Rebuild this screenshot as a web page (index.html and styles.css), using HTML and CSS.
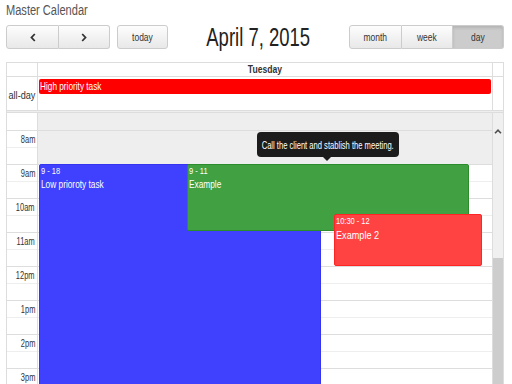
FILE: index.html
```html
<!DOCTYPE html>
<html>
<head>
    <title>Master Calendar</title>
    <link rel="stylesheet" href="styles.css">
</head>
<body>
    <h1 class="page-title"><span class="sq sq-l">Master Calendar</span></h1>

    <div class="toolbar">
        <div class="toolbar-left">
            <div class="btn-group">
                <button class="btn btn-prev">
                    <svg width="6" height="9" viewBox="0 0 6 9"><path d="M4.8 1 L1.5 4.5 L4.8 8" fill="none" stroke="#333" stroke-width="1.8"/></svg>
                </button>
                <button class="btn btn-next">
                    <svg width="6" height="9" viewBox="0 0 6 9"><path d="M1.2 1 L4.5 4.5 L1.2 8" fill="none" stroke="#333" stroke-width="1.8"/></svg>
                </button>
            </div>
            <button class="btn btn-single"><span class="sq">today</span></button>
        </div>
        <h2 class="cal-title"><span class="sq">April 7, 2015</span></h2>
        <div class="btn-group">
            <button class="btn"><span class="sq">month</span></button>
            <button class="btn"><span class="sq">week</span></button>
            <button class="btn active"><span class="sq">day</span></button>
        </div>
    </div>

    <div class="calendar">
        <div class="cal-row cal-head">
            <div class="axis"></div>
            <div class="day-col day-name"><span class="sq">Tuesday</span></div>
            <div class="gutter"></div>
        </div>

        <div class="cal-row allday-row">
            <div class="axis allday-label"><span class="sq sq-r">all-day</span></div>
            <div class="day-col allday-cell">
                <div class="allday-event"><span class="sq sq-l">High priority task</span></div>
            </div>
            <div class="gutter"></div>
        </div>

        <div class="divider"></div>

        <div class="cal-row slot-area">
            <div class="axis time-col">
                <div class="slot"></div>
                <div class="slot major"><span class="sq sq-r">8am</span></div>
                <div class="slot"></div>
                <div class="slot major"><span class="sq sq-r">9am</span></div>
                <div class="slot"></div>
                <div class="slot major"><span class="sq sq-r">10am</span></div>
                <div class="slot"></div>
                <div class="slot major"><span class="sq sq-r">11am</span></div>
                <div class="slot"></div>
                <div class="slot major"><span class="sq sq-r">12pm</span></div>
                <div class="slot"></div>
                <div class="slot major"><span class="sq sq-r">1pm</span></div>
                <div class="slot"></div>
                <div class="slot major"><span class="sq sq-r">2pm</span></div>
                <div class="slot"></div>
                <div class="slot major"><span class="sq sq-r">3pm</span></div>
                <div class="slot"></div>
            </div>

            <div class="day-col slot-col">
                <div class="slot off"></div>
                <div class="slot major off"></div>
                <div class="slot off"></div>
                <div class="slot major"></div>
                <div class="slot"></div>
                <div class="slot major"></div>
                <div class="slot"></div>
                <div class="slot major"></div>
                <div class="slot"></div>
                <div class="slot major"></div>
                <div class="slot"></div>
                <div class="slot major"></div>
                <div class="slot"></div>
                <div class="slot major"></div>
                <div class="slot"></div>
                <div class="slot major"></div>
                <div class="slot"></div>

                <!-- events placed by start/end time -->
                <div class="event event-blue" style="left: 1px; top: 51px; width: 282px; height: 306px;">
                    <div class="event-time"><span class="sq sq-l">9 - 18</span></div>
                    <div class="event-title"><span class="sq sq-l">Low prioroty task</span></div>
                </div>
                <div class="event event-green" style="left: 149px; top: 51px; width: 282px; height: 67px;">
                    <div class="event-time"><span class="sq sq-l">9 - 11</span></div>
                    <div class="event-title"><span class="sq sq-l">Example</span></div>
                </div>
                <div class="event event-red" style="left: 296px; top: 101px; width: 148px; height: 52px;">
                    <div class="event-time"><span class="sq sq-l">10:30 - 12</span></div>
                    <div class="event-title"><span class="sq sq-l">Example 2</span></div>
                </div>

                <div class="tooltip"><span class="sq">Call the client and stablish the meeting.</span></div>
            </div>

            <div class="scrollbar">
                <div class="sb-arrow">
                    <svg width="8" height="5" viewBox="0 0 8 5"><path d="M1 4.2 L4 1.2 L7 4.2" fill="none" stroke="#505050" stroke-width="1.6"/></svg>
                </div>
                <div class="sb-track"></div>
                <div class="sb-thumb"></div>
            </div>
        </div>
    </div>
</body>
</html>
```

FILE: styles.css
```css
html {
    overflow: hidden;
}

body {
    margin: 0;
    padding: 0 8px 0 6px;
    font-family: "Liberation Sans", Arial, sans-serif;
    color: #333;
    background: #fff;
}

/* the screenshot's type is narrow, so text runs are squeezed */
.sq {
    display: inline-block;
    white-space: nowrap;
    transform: scaleX(0.75);
}

.sq-l {
    transform-origin: left center;
}

.sq-r {
    transform-origin: right center;
}

.page-title {
    margin: 0;
    height: 20px;
    font-size: 14px;
    line-height: 20px;
    font-weight: normal;
    color: #555;
}

.page-title .sq {
    transform: scaleX(0.79);
}

/* toolbar */

.toolbar {
    display: flex;
    align-items: center;
    justify-content: space-between;
    margin-top: 5px;
    height: 24px;
}

.toolbar-left {
    display: flex;
    gap: 7px;
}

.btn-group {
    display: flex;
}

.btn {
    box-sizing: border-box;
    width: 51px;
    height: 24px;
    padding: 0;
    margin: 0;
    font-family: inherit;
    font-size: 11px;
    color: #333;
    background: linear-gradient(#fdfdfd, #e8e8e8);
    border: 1px solid #ccc;
    border-left: 0;
    display: flex;
    align-items: center;
    justify-content: center;
}

.btn .sq {
    transform: scaleX(0.77);
}

.btn-group .btn:first-child {
    border-left: 1px solid #ccc;
    border-radius: 3px 0 0 3px;
    width: 53px;
}

.btn-group .btn:last-child {
    border-radius: 0 3px 3px 0;
}

.btn-single {
    border-left: 1px solid #ccc;
    border-radius: 3px;
}

.btn.active {
    background: #ccc;
    box-shadow: inset 0 2px 3px rgba(0,0,0,0.12);
}

.cal-title {
    margin: 0;
    font-size: 25px;
    line-height: 24px;
    font-weight: normal;
    color: #222;
}

.cal-title .sq {
    transform: scaleX(0.74);
}

/* calendar grid */

.calendar {
    margin-top: 13px;
    border: 1px solid #ddd;
    border-bottom: 0;
}

.cal-row {
    display: flex;
}

.axis {
    box-sizing: border-box;
    width: 31px;
    flex: none;
    border-right: 1px solid #ddd;
}

.day-col {
    box-sizing: border-box;
    flex: 1;
    border-right: 1px solid #ddd;
}

.gutter {
    width: 10px;
    flex: none;
}

.cal-head {
    height: 14px;
    border-bottom: 1px solid #ddd;
    box-sizing: border-box;
}

.day-name {
    text-align: center;
    font-size: 11px;
    font-weight: bold;
    line-height: 13px;
}

.day-name .sq {
    transform: scaleX(0.78);
}

.allday-row {
    height: 33px;
}

.allday-label {
    display: flex;
    align-items: center;
    justify-content: flex-end;
    padding-right: 2px;
    padding-top: 3px;
    font-size: 11px;
}

.allday-label .sq {
    transform: scaleX(0.83);
}

.allday-cell {
    padding: 2px 1px 0 1px;
}

.allday-event {
    height: 15px;
    line-height: 15px;
    padding-left: 1px;
    font-size: 11px;
    color: #fff;
    background: #f00;
    border-radius: 2px;
}

.divider {
    height: 1px;
    background: #eee;
    border-top: 1px solid #ddd;
    border-bottom: 1px solid #ddd;
}

/* time slots */

.slot-area {
    height: 271px;
    overflow: hidden;
}

.slot {
    box-sizing: border-box;
    height: 17px;
    border-top: 1px solid #eee;
}

.slot:first-child {
    border-top: 0;
}

.slot.major {
    border-top-color: #ddd;
}

.slot.off {
    background: #eee;
}

.time-col .slot {
    text-align: right;
    padding-right: 2px;
    font-size: 11px;
    line-height: 16px;
}

.time-col .sq {
    transform: scaleX(0.68);
}

.slot-col {
    position: relative;
}

.event {
    position: absolute;
    box-sizing: border-box;
    padding: 1px 1px 0 1px;
    color: #fff;
    border: 1px solid;
    border-radius: 2px;
    overflow: hidden;
}

.event-time {
    font-size: 9px;
    line-height: 11px;
}

.event-title {
    margin-top: 1px;
    font-size: 10px;
    line-height: 14px;
}

.event .sq {
    transform: scaleX(0.83);
}

.event-blue {
    background: #4040ff;
    border-color: #3535f0;
}

.event-green {
    background: #41a041;
    border-color: #2b8c2b;
}

.event-red {
    background: #ff4343;
    border-color: #ff2525;
}

.event-red .event-title {
    font-size: 11px;
}

.tooltip {
    position: absolute;
    left: 219px;
    top: 19px;
    width: 142px;
    height: 25px;
    display: flex;
    align-items: center;
    justify-content: center;
    font-size: 11px;
    color: #fff;
    background: #1c1c1c;
    border-radius: 4px;
}

.tooltip .sq {
    transform: scaleX(0.69);
}

.tooltip::after {
    content: "";
    position: absolute;
    left: 66px;
    top: 25px;
    border: 4px solid transparent;
    border-top-color: #1c1c1c;
}

/* fake scrollbar */

.scrollbar {
    width: 10px;
    flex: none;
    display: flex;
    flex-direction: column;
    background: #f0f0f0;
}

.sb-arrow {
    height: 26px;
    display: flex;
    justify-content: center;
    padding-top: 16px;
    box-sizing: border-box;
}

.sb-track {
    height: 119px;
}

.sb-thumb {
    flex: 1;
    background: #cdcdcd;
}
```
